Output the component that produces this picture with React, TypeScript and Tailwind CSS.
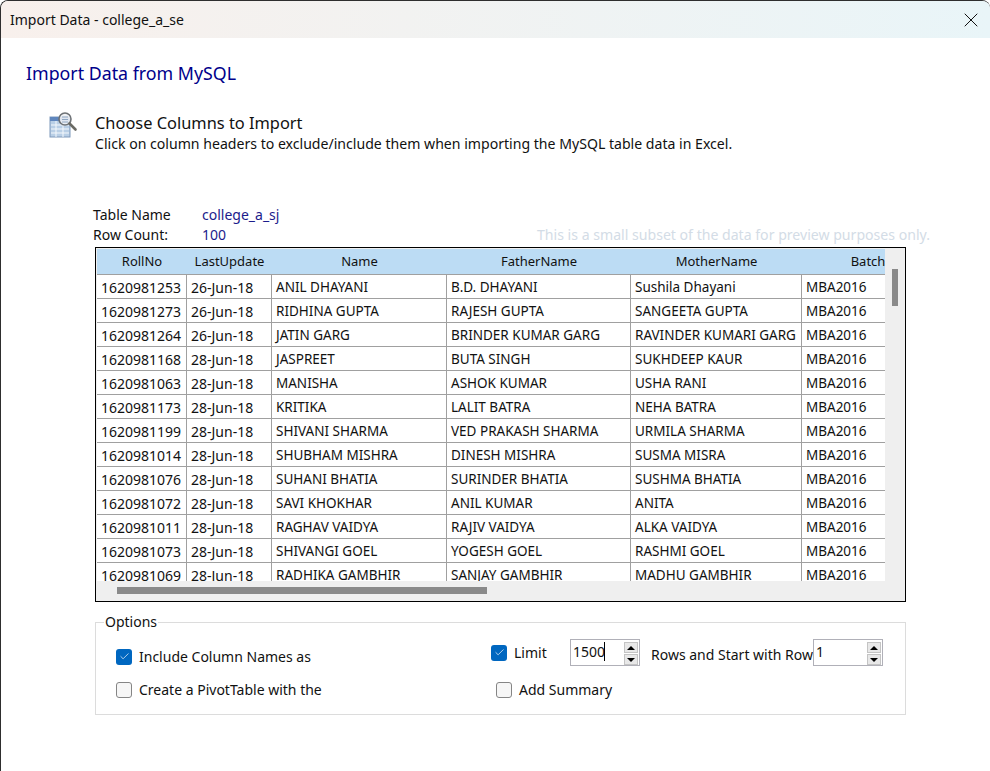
import { Check, X } from "lucide-react";

const columns = [
  { name: "RollNo", width: "w-[90px]" },
  { name: "LastUpdate", width: "w-[85px]" },
  { name: "Name", width: "w-[175px]" },
  { name: "FatherName", width: "w-[184px]" },
  { name: "MotherName", width: "w-[171px]" },
  { name: "Batch", width: "w-[132px]" },
];

const rows = [
  ["1620981253", "26-Jun-18", "ANIL DHAYANI", "B.D. DHAYANI", "Sushila Dhayani", "MBA2016"],
  ["1620981273", "26-Jun-18", "RIDHINA GUPTA", "RAJESH GUPTA", "SANGEETA GUPTA", "MBA2016"],
  ["1620981264", "26-Jun-18", "JATIN GARG", "BRINDER KUMAR GARG", "RAVINDER KUMARI GARG", "MBA2016"],
  ["1620981168", "28-Jun-18", "JASPREET", "BUTA SINGH", "SUKHDEEP KAUR", "MBA2016"],
  ["1620981063", "28-Jun-18", "MANISHA", "ASHOK KUMAR", "USHA RANI", "MBA2016"],
  ["1620981173", "28-Jun-18", "KRITIKA", "LALIT BATRA", "NEHA BATRA", "MBA2016"],
  ["1620981199", "28-Jun-18", "SHIVANI SHARMA", "VED PRAKASH SHARMA", "URMILA SHARMA", "MBA2016"],
  ["1620981014", "28-Jun-18", "SHUBHAM MISHRA", "DINESH MISHRA", "SUSMA MISRA", "MBA2016"],
  ["1620981076", "28-Jun-18", "SUHANI BHATIA", "SURINDER BHATIA", "SUSHMA BHATIA", "MBA2016"],
  ["1620981072", "28-Jun-18", "SAVI KHOKHAR", "ANIL KUMAR", "ANITA", "MBA2016"],
  ["1620981011", "28-Jun-18", "RAGHAV VAIDYA", "RAJIV VAIDYA", "ALKA VAIDYA", "MBA2016"],
  ["1620981073", "28-Jun-18", "SHIVANGI GOEL", "YOGESH GOEL", "RASHMI GOEL", "MBA2016"],
  ["1620981069", "28-Jun-18", "RADHIKA GAMBHIR", "SANJAY GAMBHIR", "MADHU GAMBHIR", "MBA2016"],
];

const TableIcon = () => (
  <svg width="30" height="28" viewBox="0 0 30 28" className="shrink-0">
    <rect x="1" y="6" width="20" height="20" fill="#b9cfe6" stroke="#7f99bb" />
    <rect x="1" y="6" width="20" height="4" fill="#5f86bd" />
    <path d="M2 14h18M2 18h18M2 22h18M7 10v16M14 10v16" stroke="#f4f8fc" strokeWidth="1" />
    <circle cx="16" cy="8" r="6" fill="#eef1f4" fillOpacity="0.9" stroke="#6e7276" strokeWidth="1.6" />
    <path d="M13 6h6M13 8.500h6M13 11h6" stroke="#8fa6c2" />
    <path d="M20.500 12.500l6 6" stroke="#6a6a64" strokeWidth="2.600" strokeLinecap="round" />
  </svg>
);

const CheckBox = ({ checked, label, className = "" }: { checked?: boolean; label: string; className?: string }) => (
  <div className={`flex items-center gap-[7px] ${className}`}>
    {checked ? (
      <span className="flex h-4 w-4 items-center justify-center rounded-[3px] bg-[#0067c0]">
        <Check size={11} color="white" strokeWidth={1.5} />
      </span>
    ) : (
      <span className="h-4 w-4 rounded-[3px] border border-[#858585] bg-[#f6f6f6]" />
    )}
    <span>{label}</span>
  </div>
);

const Spinner = ({ value, caret }: { value: string; caret?: boolean }) => (
  <div className="flex h-[27px] w-[70px] shrink-0 items-start justify-between border border-[#b0b0b8] bg-white pl-[2px] pr-[1px] pt-[1px]">
    <span className="flex h-[20px] items-center">
      {value}
      {caret && <span className="ml-[-1px] h-[19px] w-px bg-black" />}
    </span>
    <div className="flex flex-col gap-px pt-px">
      <span className="flex h-[11px] w-[14px] items-center justify-center border border-[#c4c4c4] bg-[#e8e8e8]">
        <span className="h-0 w-0 border-x-[4px] border-b-[4px] border-x-transparent border-b-black" />
      </span>
      <span className="flex h-[11px] w-[14px] items-center justify-center border border-[#c4c4c4] bg-[#e8e8e8]">
        <span className="h-0 w-0 border-x-[4px] border-t-[4px] border-x-transparent border-t-black" />
      </span>
    </div>
  </div>
);

export default function App() {
  return (
    <div className="flex h-[771px] w-[990px] flex-col overflow-hidden rounded-t-lg border-l border-t border-[#2e2e2e] bg-white font-['Noto_Sans',sans-serif] text-[14px] text-[#111]">
      <div className="flex h-[37px] shrink-0 items-center justify-between bg-gradient-to-r from-[#f8f0ec] to-[#e9f5f8] pl-[9px] pr-[7px]">
        <span>Import Data - college_a_se</span>
        <X size={24} strokeWidth={1} color="#111" />
      </div>

      <h1 className="ml-[25px] mt-[22px] text-[17.8px] leading-[27px] text-[#00008b]">Import Data from MySQL</h1>

      <div className="ml-[48px] mt-[24px] flex gap-[16px]">
        <TableIcon />
        <div className="pt-[1px]">
          <div className="text-[16.400px] leading-[22px]">Choose Columns to Import</div>
          <div className="text-[14.100px] leading-[20px]">Click on column headers to exclude/include them when importing the MySQL table data in Excel.</div>
        </div>
      </div>

      <div className="ml-[92px] mt-[51px] flex w-[837px] flex-col leading-[20px]">
        <div className="flex">
          <span className="w-[109px]">Table Name</span>
          <span className="text-[#1c1c8c]">college_a_sj</span>
        </div>
        <div className="flex">
          <span className="w-[109px]">Row Count:</span>
          <span className="text-[#1c1c8c]">100</span>
          <span className="ml-auto text-[14.100px] text-[#d3dce6]">This is a small subset of the data for preview purposes only.</span>
        </div>
      </div>

      <div className="ml-[94px] mt-[2px] flex h-[355px] w-[811px] flex-col border border-black bg-[#efefef] pt-px">
        <div className="flex min-h-0 flex-1">
          <div className="ml-px w-[788px] overflow-hidden bg-white">
            <div className="flex h-[26px] border-b border-[#a0a0a0] bg-[#bcdcf4] text-[13px]">
              {columns.map((c) => (
                <div key={c.name} className={`${c.width} flex shrink-0 items-center justify-center pt-px`}>
                  {c.name}
                </div>
              ))}
            </div>
            {rows.map((row) => (
              <div key={row[0]} className="flex h-[24px] border-b border-[#a0a0a0]">
                {row.map((cell, i) => (
                  <div
                    key={i}
                    className={`${columns[i].width} ${i < 2 ? "text-[14px]" : "text-[13.500px]"} flex shrink-0 items-center whitespace-nowrap border-r border-[#a0a0a0] pl-[4px] pt-px`}
                  >
                    {cell}
                  </div>
                ))}
              </div>
            ))}
          </div>
          <div className="flex-1 pl-[7px] pt-[20px]">
            <div className="h-[37px] w-[6px] bg-[#8a8a8a]" />
          </div>
        </div>
        <div className="h-[20px] shrink-0 pl-[21px] pt-[6px]">
          <div className="h-[7px] w-[370px] bg-[#8a8a8a]" />
        </div>
      </div>

      <fieldset className="ml-[94px] mt-[10px] h-[103px] w-[811px] border border-[#dcdcdc] px-[20px]">
        <legend className="ml-[-12px] px-[1px] leading-[20px]">Options</legend>
        <div className="flex">
          <div className="w-[375px] pt-[14px]">
            <CheckBox checked label="Include Column Names as" />
            <CheckBox label="Create a PivotTable with the" className="mt-[12px]" />
          </div>
          <div className="pt-[7px]">
            <div className="flex items-start">
              <CheckBox checked label="Limit" className="mt-[3px] w-[79px]" />
              <Spinner value="1500" caret />
              <span className="ml-[11px] mt-[5px] w-[162px] overflow-hidden whitespace-nowrap">Rows and Start with Row</span>
              <Spinner value="1" />
            </div>
            <CheckBox label="Add Summary" className="ml-[5px] mt-[13px]" />
          </div>
        </div>
      </fieldset>
    </div>
  );
}
